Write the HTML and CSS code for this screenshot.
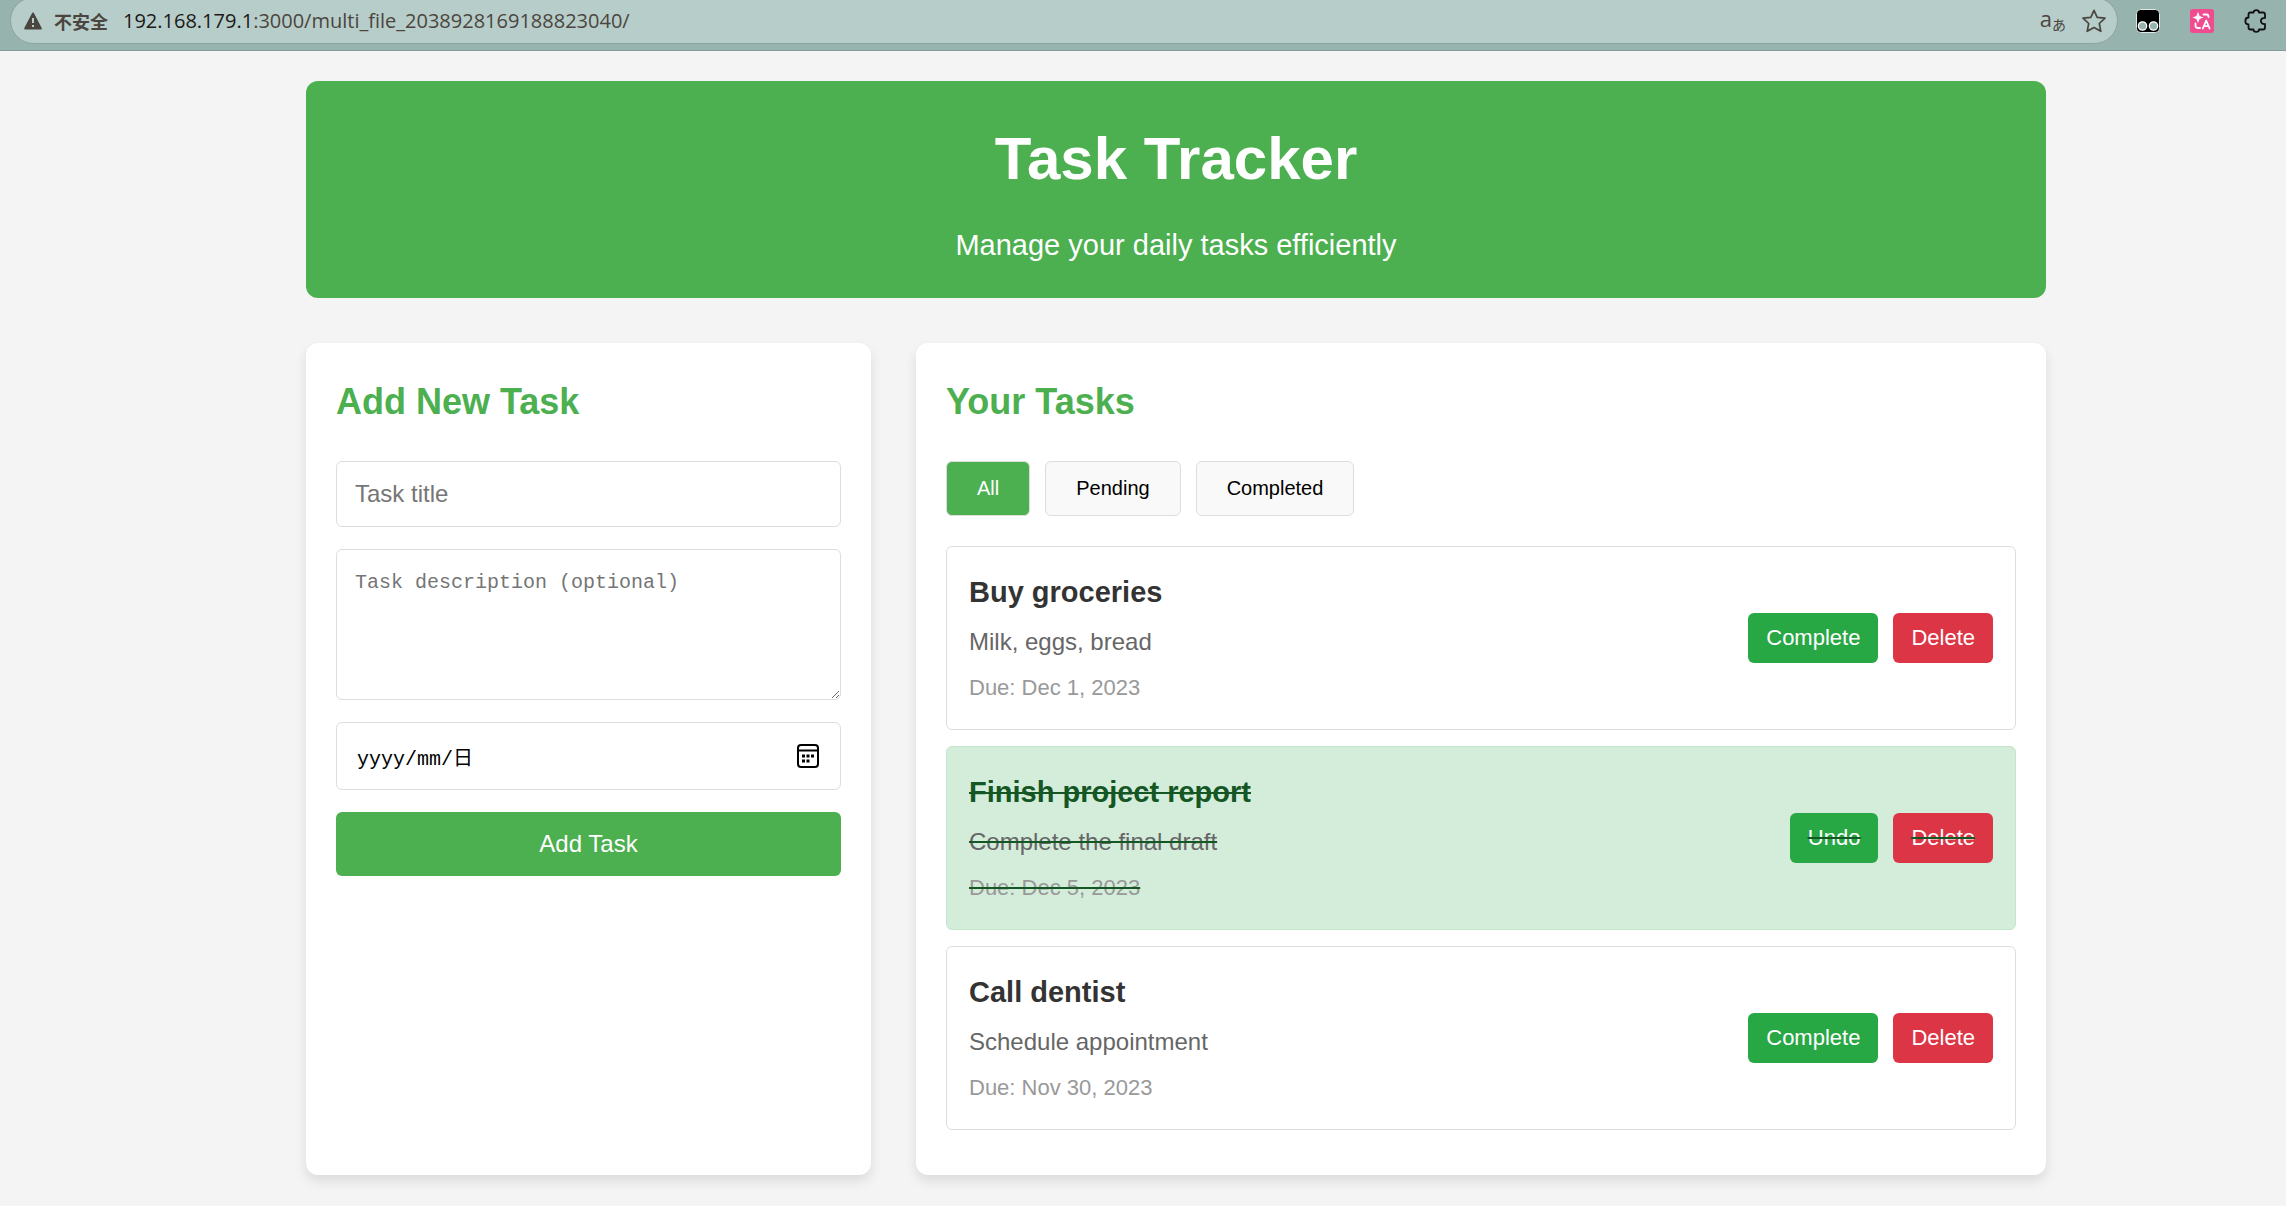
FILE: index.html
```html
<!DOCTYPE html>
<html lang="en">
<head>
    <meta charset="UTF-8">
    <meta name="viewport" content="width=device-width, initial-scale=1.0">
    <title>Task Tracker</title>
    <link rel="stylesheet" href="styles.css">
</head>
<body>

    <div class="toolbar">
        <div class="address-bar">
            <svg class="warning-icon" width="18" height="18" viewBox="0 0 18 18">
                <path d="M9 1.5 L16.8 16.5 H1.2 Z" fill="#4b4540" stroke="#4b4540" stroke-width="2" stroke-linejoin="round"/>
                <path d="M9 6 V11 M9 13 V15" stroke="#b7cdc9" stroke-width="2"/>
            </svg>
            <span class="insecure" lang="zh">不安全</span>
            <span class="url"><span class="host">192.168.179.1</span>:3000/multi_file_2038928169188823040/</span>
            <button type="button" class="icon-button translate" lang="ja"><span class="latin">a</span><span class="kana">あ</span></button>
            <button type="button" class="icon-button" aria-label="Favorite">
                <svg width="24" height="24" viewBox="0 0 24 24" fill="none" stroke="#4b4540" stroke-width="1.7" stroke-linejoin="round">
                    <path d="M12 1.3 L15.2 8.3 L23 9.2 L17.3 14.5 L18.8 22.3 L12 18.5 L5.2 22.3 L6.7 14.5 L1 9.2 L8.8 8.3 Z"/>
                </svg>
            </button>
        </div>
        <div class="extensions">
            <button type="button" class="icon-button" aria-label="Scripts">
                <svg width="24" height="24" viewBox="0 0 24 24">
                    <rect x="0.5" y="0.5" width="23" height="23" rx="4" fill="#000" stroke="#dfe8e6"/>
                    <circle cx="6.5" cy="17" r="4.2" fill="#97b3ae" stroke="#fff" stroke-width="1.2"/>
                    <circle cx="17.5" cy="17" r="4.2" fill="#97b3ae" stroke="#fff" stroke-width="1.2"/>
                </svg>
            </button>
            <button type="button" class="icon-button" aria-label="Translator">
                <svg width="24" height="24" viewBox="0 0 24 24" fill="none" stroke="#fff" stroke-width="1.8" stroke-linecap="round" stroke-linejoin="round">
                    <rect width="24" height="24" rx="3" fill="#ef4d90" stroke="none"/>
                    <path d="M8 3 L9.6 7 L13.5 8.5 L9.6 10 L8 14 L6.4 10 L2.5 8.5 L6.4 7 Z" fill="#fff" stroke="none"/>
                    <path d="M13.5 5.5 H16.5 Q18.5 5.5 18.5 8"/>
                    <path d="M5.5 14.5 V16.5 Q5.5 19 8 19 H10"/>
                    <path d="M12.8 19.5 L16.2 11.5 L19.6 19.5 M14 17.2 H18.4"/>
                </svg>
            </button>
            <button type="button" class="icon-button" aria-label="Extensions">
                <svg width="24" height="24" viewBox="0 0 24 24" fill="none" stroke="#111" stroke-width="1.8" stroke-linejoin="round">
                    <path d="M6 3.5 H9.5 C9.5 0.3 15 0.3 15 3.5 H19 Q21 3.5 21 5.5 V9 C15.5 8.5 15.5 15.5 21 15 V18.5 Q21 20.5 19 20.5 H15 C15 23.7 9.5 23.7 9.5 20.5 H6.5 Q4.5 20.5 4.5 18.5 V15.5 C0.3 15.5 0.3 8.5 4.5 8.5 V5.5 Q4.5 3.5 6.5 3.5 Z"/>
                </svg>
            </button>
        </div>
    </div>

    <div class="container">
        <header>
            <h1>Task Tracker</h1>
            <p>Manage your daily tasks efficiently</p>
        </header>

        <main>
            <section class="panel">
                <h2>Add New Task</h2>
                <form id="taskForm">
                    <input type="text" id="taskTitle" placeholder="Task title" aria-label="Task title">
                    <textarea id="taskDescription" placeholder="Task description (optional)" aria-label="Task description"></textarea>
                    <div class="date-field">
                        <input type="text" id="taskDate" value="yyyy/mm/日" aria-label="Due date">
                        <button type="button" class="date-picker" aria-label="Choose date">
                            <svg width="22" height="24" viewBox="0 0 22 24" fill="none" stroke="#000" stroke-width="2">
                                <rect x="1" y="1" width="20" height="22" rx="3"/>
                                <path d="M1 6.5 H21"/>
                                <path d="M5 12 H8 M9.5 12 H12.5 M14 12 H17 M5 17 H8 M9.5 17 H12.5" stroke-width="3"/>
                            </svg>
                        </button>
                    </div>
                    <button type="submit" class="add-btn">Add Task</button>
                </form>
            </section>

            <section class="panel">
                <h2>Your Tasks</h2>
                <div class="filters">
                    <button type="button" class="filter-btn active">All</button>
                    <button type="button" class="filter-btn">Pending</button>
                    <button type="button" class="filter-btn">Completed</button>
                </div>
                <ul class="task-list">
                    <li class="task-item">
                        <div class="task-info">
                            <h3>Buy groceries</h3>
                            <p>Milk, eggs, bread</p>
                            <p class="due">Due: Dec 1, 2023</p>
                        </div>
                        <div class="task-actions">
                            <button type="button" class="complete-btn">Complete</button>
                            <button type="button" class="delete-btn">Delete</button>
                        </div>
                    </li>
                    <li class="task-item completed">
                        <div class="task-info">
                            <h3>Finish project report</h3>
                            <p>Complete the final draft</p>
                            <p class="due">Due: Dec 5, 2023</p>
                        </div>
                        <div class="task-actions">
                            <button type="button" class="complete-btn">Undo</button>
                            <button type="button" class="delete-btn">Delete</button>
                        </div>
                    </li>
                    <li class="task-item">
                        <div class="task-info">
                            <h3>Call dentist</h3>
                            <p>Schedule appointment</p>
                            <p class="due">Due: Nov 30, 2023</p>
                        </div>
                        <div class="task-actions">
                            <button type="button" class="complete-btn">Complete</button>
                            <button type="button" class="delete-btn">Delete</button>
                        </div>
                    </li>
                </ul>
            </section>
        </main>
    </div>

</body>
</html>
```
FILE: styles.css
```css
* {
    box-sizing: border-box;
    margin: 0;
    padding: 0;
}
body {
    font-family: Arial, "Liberation Sans", sans-serif;
    font-size: 24px;
    line-height: 38px;
    background-color: #f4f4f4;
    color: #333;
}
button {
    font-family: inherit;
    border: none;
    border-radius: 6px;
    cursor: pointer;
}

/* browser toolbar */
.toolbar {
    display: flex;
    align-items: flex-start;
    height: 51px;
    padding: 0 18px 0 10px;
    background-color: #97b3ae;
    border-bottom: 1px solid #829c98;
    overflow: hidden;
}
.address-bar {
    display: flex;
    flex: 1;
    align-items: center;
    height: 47px;
    margin-top: -3px;
    padding: 0 11px 0 13px;
    background-color: #b7cdc9;
    border: 1px solid #8aa5a0;
    border-radius: 24px;
    color: #4b4540;
    font-family: "Open Sans", "Noto Sans CJK SC", sans-serif;
    font-size: 20px;
}
.insecure {
    margin-left: 12px;
    font-family: "Noto Sans CJK SC", sans-serif;
    font-size: 18px;
    font-weight: bold;
}
.url {
    flex: 1;
    margin-left: 15px;
}
.host {
    color: #1c1a18;
}
.icon-button {
    display: flex;
    align-items: center;
    background: none;
    color: #4b4540;
}
.translate {
    align-items: center;
    margin-right: 16px;
}
.latin {
    font-family: "Open Sans", sans-serif;
    font-size: 22px;
    line-height: 28px;
    padding-bottom: 6px;
}
.kana {
    font-family: "Noto Sans CJK JP", sans-serif;
    font-size: 14px;
    line-height: 28px;
    padding-top: 6px;
}
.extensions {
    display: flex;
    gap: 30px;
    margin-left: 18px;
    padding-top: 9px;
}

/* page */
.container {
    max-width: 1866px;
    margin: 0 auto;
    padding: 30px 30px 30px 96px;
}
@media (min-width: 1900px) {
    .container {
        max-width: none;
        width: 1740px;
        padding: 30px 0;
        margin-left: calc(50% - 837px);
    }
}
header {
    padding: 30px;
    margin-bottom: 45px;
    background-color: #4CAF50;
    border-radius: 12px;
    color: white;
    text-align: center;
}
h1 {
    margin-bottom: 15px;
    font-size: 60px;
    line-height: 96px;
}
header p {
    font-size: 29px;
    line-height: 46px;
}
main {
    display: grid;
    grid-template-columns: 1fr 2fr;
    gap: 45px;
}
.panel {
    padding: 30px 30px 45px;
    background: white;
    border-radius: 12px;
    box-shadow: 0 6px 12px rgba(0, 0, 0, 0.1);
}
h2 {
    margin-bottom: 30px;
    color: #4CAF50;
    font-size: 36px;
    line-height: 58px;
}

/* form */
form {
    display: flex;
    flex-direction: column;
    gap: 22px;
}
input,
textarea {
    width: 100%;
    padding: 18px;
    border: 1px solid #ddd;
    border-radius: 6px;
    background: white;
    font-family: inherit;
    font-size: 24px;
    line-height: 28px;
}
input {
    height: 66px;
}
input::placeholder,
textarea::placeholder {
    color: #757575;
}
textarea {
    display: block;
    height: 151px;
    resize: vertical;
    font-family: "Liberation Mono", monospace;
    font-size: 20px;
    line-height: 30px;
}
.date-field {
    position: relative;
}
.date-field input {
    display: block;
    height: 68px;
    padding: 18px 60px 18px 20px;
    font-family: "Liberation Mono", "Noto Sans CJK SC", monospace;
    font-size: 20px;
}
.date-picker {
    position: absolute;
    top: 22px;
    right: 22px;
    display: flex;
    background: none;
}
.add-btn {
    padding: 18px;
    background-color: #4CAF50;
    color: white;
    font-size: 24px;
    line-height: 28px;
}

/* tasks */
.filters {
    display: flex;
    gap: 15px;
    margin-bottom: 30px;
}
.filter-btn {
    padding: 15px 30px;
    border: 1px solid #ddd;
    background-color: #f9f9f9;
    color: #000;
    font-size: 20px;
    line-height: 23px;
}
.filter-btn.active {
    background-color: #4CAF50;
    color: white;
}
.task-list {
    display: flex;
    flex-direction: column;
    gap: 16px;
    list-style: none;
}
.task-item {
    display: flex;
    justify-content: space-between;
    align-items: center;
    padding: 22px;
    border: 1px solid #ddd;
    border-radius: 6px;
}
.task-info {
    display: flex;
    flex-direction: column;
    gap: 8px;
}
h3 {
    font-size: 29px;
    line-height: 46px;
}
.task-info p {
    color: #666;
}
.task-info .due {
    color: #999;
    font-size: 22px;
}
.task-actions {
    display: flex;
    gap: 15px;
}
.task-actions button {
    padding: 12px 18px;
    color: white;
    font-size: 22px;
    line-height: 26px;
}
.complete-btn {
    background-color: #28a745;
}
.delete-btn {
    background-color: #dc3545;
}
.task-item.completed {
    background-color: #d4edda;
    border-color: #c3e6cb;
    color: #155724;
    text-decoration: line-through;
}
.completed button {
    text-decoration: line-through #155724;
}
```
